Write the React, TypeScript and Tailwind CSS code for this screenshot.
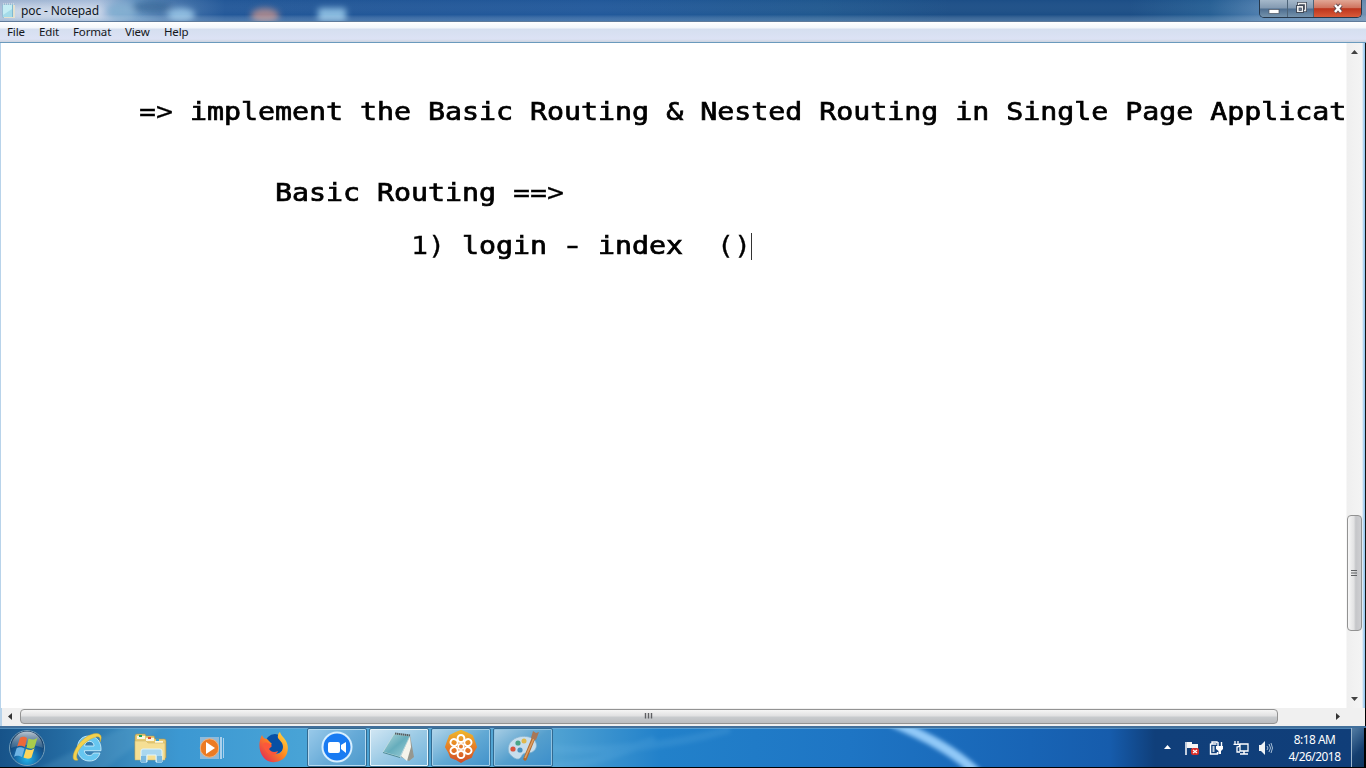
import React from "react";

const menuItems = [
  { label: "File", width: "w-[32px]" },
  { label: "Edit", width: "w-[34px]" },
  { label: "Format", width: "w-[52px]" },
  { label: "View", width: "w-[39px]" },
  { label: "Help", width: "w-[40px]" },
];

function NotepadIcon() {
  return (
    <svg width="14" height="16" viewBox="0 0 14 16">
      <rect x="0.5" y="1.5" width="12" height="13" fill="#7fb9d0" />
      <rect x="1" y="2" width="9" height="12" fill="#a4dbe9" />
      <path d="M1 2h9v4L1 12z" fill="#c4edf3" />
      <path d="M11 2h2v13H2v-1h9z" fill="#e3e1cf" />
      <path d="M1 1h12" stroke="#e9eff0" strokeDasharray="1 1" />
    </svg>
  );
}

function TitleBar() {
  return (
    <header className="relative flex h-[21px] shrink-0 items-start overflow-hidden bg-[linear-gradient(90deg,#aebfd8_0px,#b7c9e3_100px,#6f9dc8_135px,#4b79ae_170px,#235899_225px,#225798_320px,#22599b_600px,#20588f_820px,#1c4e86_950px,#1c4e86_1130px,#265f94_1210px,#4e7eae_1260px,#6f90b2_1366px)]">
      <svg className="absolute inset-0" width="1366" height="21">
        <defs>
          <filter id="soft" x="-30%" y="-50%" width="160%" height="200%"><feGaussianBlur stdDeviation="3" /></filter>
          <linearGradient id="titleShade" x1="0" x2="0" y1="0" y2="1">
            <stop offset="0" stopColor="#1d4f89" stopOpacity=".12" /><stop offset=".7" stopColor="#fff" stopOpacity="0" /><stop offset="1" stopColor="#91b2d0" stopOpacity=".35" />
          </linearGradient>
        </defs>
        <g filter="url(#soft)">
          <rect x="8" y="5" width="93" height="13" rx="6" fill="#d3ddec" opacity=".8" />
          <ellipse cx="121" cy="11" rx="14" ry="8" fill="#81add0" />
          <ellipse cx="152" cy="7" rx="20" ry="6" fill="#315f91" opacity=".7" />
          <ellipse cx="181" cy="15" rx="14" ry="7" fill="#8ebce0" />
          <ellipse cx="265" cy="16" rx="14" ry="8" fill="#a1858f" />
          <rect x="318" y="8" width="28" height="14" rx="3" fill="#87b9df" />
        </g>
        <rect width="1366" height="21" fill="url(#titleShade)" />
      </svg>
      <div className="relative flex h-[21px] items-center pl-[2px]">
        <NotepadIcon />
        <span className="ml-[5px] text-[12px] tracking-[-0.12px] text-[#101722]">poc - Notepad</span>
      </div>
      <div className="relative ml-auto mr-[4px] flex h-[18px] w-[103px] overflow-hidden rounded-b-[5px] border border-t-0 border-[#26384b]">
        <button aria-label="Minimize" className="flex w-[28px] items-center justify-center border-r border-[#4d6479] bg-[linear-gradient(#a5b8ca_0%,#8299b1_48%,#4d6d8f_52%,#7593ad_100%)]">
          <svg width="14" height="16"><rect x="2" y="8.5" width="10" height="4" fill="#fff" stroke="#4b5360" strokeWidth=".7" /></svg>
        </button>
        <button aria-label="Restore" className="flex w-[26px] items-center justify-center border-r border-[#4d6479] bg-[linear-gradient(#a5b8ca_0%,#8299b1_48%,#4d6d8f_52%,#7593ad_100%)]">
          <svg width="14" height="16" fill="none"><path d="M4.5 4V2.5h7v7H10" stroke="#424b59" strokeWidth="3" /><path d="M4.5 4V2.5h7v7H10" stroke="#eee" strokeWidth="1.3" /><rect x="2.5" y="4.5" width="7" height="7" fill="#eee" stroke="#424b59" /><rect x="5" y="7" width="2.5" height="2.5" fill="#6b8098" stroke="#424b59" strokeWidth=".7" /></svg>
        </button>
        <button aria-label="Close" className="flex flex-1 items-center justify-center bg-[linear-gradient(#e1a795_0%,#cf745f_46%,#bc351d_51%,#d95b39_100%)]">
          <svg width="14" height="16" fill="none"><path d="m4 4 6 7m0-7-6 7" stroke="#674a4d" strokeWidth="4.3" /><path d="m4 4 6 7m0-7-6 7" stroke="#fff" strokeWidth="2.4" /></svg>
        </button>
      </div>
    </header>
  );
}

function MenuBar() {
  return (
    <nav className="flex h-[22px] shrink-0 items-center border-t border-b border-t-[#5f7b9b] border-b-[#6a9abd] bg-[linear-gradient(#fff_0px,#f2f6fb_6px,#d5dff0_7px,#dce2f5_17px,#cdd4df_20px)] pl-[7px] text-[11.5px] tracking-[-0.15px] text-[#15171b]">
      {menuItems.map((m) => <span key={m.label} className={m.width}>{m.label}</span>)}
    </nav>
  );
}

function Thin({ children }: { children: React.ReactNode }) {
  return <span className="[-webkit-text-stroke:0.3px_#000]">{children}</span>;
}

function DocLine({ children, indent, spacing }: { children: React.ReactNode; indent: string; spacing: string }) {
  return <div className={`${indent} ${spacing} flex h-[27px] items-center`}><div className="origin-left scale-x-[1.1768] whitespace-pre">{children}</div></div>;
}

function Editor() {
  return (
    <div className="flex h-[665px] shrink-0">
      <main className="w-[1344px] overflow-hidden border-l border-[#b8d3ea] bg-white pt-[56px] font-['DejaVu_Sans_Mono',monospace] text-[24px] leading-[27px] text-black [-webkit-text-stroke:0.7px_#000]">
        <DocLine indent="pl-[138px]" spacing="mb-[54px]"><Thin>{"=>"}</Thin>{" implement the Basic Routing & Nested Routing in Single Page Applicat"}</DocLine>
        <DocLine indent="pl-[274px]" spacing="mb-[27px]">{"Basic Routing "}<Thin>{"==>"}</Thin></DocLine>
        <div className="-mt-px flex h-[27px] items-center pl-[410px]">
          <div className="w-[340px]"><div className="origin-left scale-x-[1.1768] whitespace-pre"><Thin>1)</Thin>{" login "}<span className="inline-block scale-x-[1.35] [-webkit-text-stroke:0.3px_#000]">-</span>{" index  "}<Thin>()</Thin></div></div>
          <span className="h-[27px] w-px bg-[#333]" />
        </div>
      </main>
      <div className="flex w-[22px] flex-col items-center border-r border-[#111] bg-[linear-gradient(90deg,#fff_2px,#efefef_3px,#f4f4f4_18px,#9bcaf0_20px)] pr-px">
        <svg className="mt-[7px] shrink-0" width="7" height="5"><path d="M0 4 3.5 0 7 4z" fill="#414141" /></svg>
        <div className="mt-[460px] flex h-[116px] w-[15px] shrink-0 items-center justify-center rounded-sm border border-[#929292] bg-[linear-gradient(90deg,#f7f7f7,#e2e2e3_45%,#c5c6c9_60%,#cfcfd2)]">
          <svg width="7" height="9"><path d="M0 1.5h6M0 4h6M0 6.5h6" stroke="#5f6063" strokeWidth="1.2" /></svg>
        </div>
        <svg className="mt-[66px] shrink-0" width="7" height="5"><path d="m0 0 3.5 4L7 0z" fill="#414141" /></svg>
      </div>
    </div>
  );
}

function HorizontalScroll() {
  return (
    <div className="flex h-[18px] shrink-0 items-center border-l-2 border-r border-l-[#b8d3ea] border-r-black bg-[#f0f0f0] pb-px">
      <svg className="ml-[5px]" width="5" height="7"><path d="M5 0 1 3.5 5 7z" fill="#333" /></svg>
      <div className="ml-[8px] flex h-[15px] w-[1258px] items-center justify-center rounded-sm border border-[#939393] bg-[linear-gradient(#f5f5f5,#e1e1e2_45%,#c8cbce_55%,#bbbdc0)]">
        <svg className="mr-[2px] mb-px" width="9" height="8"><path d="M1.5 1v5.5M4.5 1v5.5M7.5 1v5.5" stroke="#5f6063" strokeWidth="1.4" /></svg>
      </div>
      <svg className="ml-[58px]" width="5" height="7"><path d="m0 0 4 3.5L0 7z" fill="#333" /></svg>
    </div>
  );
}

function StartIcon() {
  return (
    <svg width="38" height="38" viewBox="0 0 38 38">
      <defs><radialGradient id="orb" cx=".5" cy=".8" r=".7"><stop stopColor="#22b4eb" /><stop offset=".55" stopColor="#165e9b" /><stop offset="1" stopColor="#12355c" /></radialGradient><linearGradient id="orbGlow" x1="0" x2="0" y1="0" y2="1"><stop stopColor="#e6edf2" stopOpacity=".8" /><stop offset="1" stopColor="#8ba7b9" stopOpacity=".25" /></linearGradient></defs>
      <circle cx="19" cy="19" r="17.5" fill="url(#orb)" stroke="#739eba" />
      <path d="M3 19C4-3 34-3 35 19c-9-4-22-4-32 0" fill="url(#orbGlow)" />
      <path d="M12 9c3-2 5-1 7 0l-2 9c-3-1-6-2-8 0z" fill="#ed693a" />
      <path d="M20.500 9.500c3 1 6 2 9-1l-3 10c-3 2-5 1-8 0z" fill="#a8cc4b" />
      <path d="M8.500 19.500c3-2 5-1 8 0l-2.500 8.500c-3-1-5-2-8 0z" fill="#6fb4e4" />
      <path d="M18 20c3 1 5.500 2 8.500-1l-3 9.500c-3 2-5 1-8 0z" fill="#fdd65b" />
    </svg>
  );
}

function ExplorerIcon() {
  return (
    <svg width="32" height="34" viewBox="0 0 32 34" fill="none">
      <path d="M17 5C9 5 5.500 10.500 5.500 17.500S10 30 17.500 30c5.500 0 9-3 10.500-8h-6.500c-1 1.700-2.200 2.500-4 2.500-3 0-5-1.700-5.200-4.800H29C29.500 11 25 5 17 5M12.500 15c.5-3 2.300-4.600 5-4.600s4.300 1.700 4.600 4.600z" fill="#67c6f0" stroke="#d6f3ff" strokeWidth=".8" fillRule="evenodd" />
      <path d="M6 29C-4 32 3 14 13 7 21 1 33 0 28 11c1-6-2-6-7-4C11 11 1 24 6 29" fill="#f3d24f" stroke="#d9ac2d" strokeWidth=".5" />
    </svg>
  );
}

function FolderIcon() {
  return (
    <svg width="34" height="32" viewBox="0 0 34 32">
      <path d="M2 4q0-2 2-2h8l1 2h8l1 3h9q2 0 2 2v17H2z" fill="#e8ca72" stroke="#a9924f" strokeWidth=".6" />
      <path d="M4 4h8v3H4m9-1h8v3h-8m9 0h8v2h-8" fill="#faf7df" /><path d="M6 3h3v2H6" fill="#1aa356" /><path d="M15 5h3v2h-3" fill="#db4b33" /><path d="M23 7h3v2h-3" fill="#369fd0" />
      <path d="M2 9h11l2 2h17v17H2z" fill="#f5df94" stroke="#c7ad66" strokeWidth=".5" />
      <path d="M8 30V19q0-2 2-2h17q2 0 2 2v11h-6v-7h-9v7z" fill="#a9d7ef" stroke="#e0f5fd" /><path d="M8 24v6h5v-6m11 0v6h5v-6" fill="#79b8df" />
    </svg>
  );
}

function MediaIcon() {
  return <svg width="28" height="28" viewBox="0 0 28 28"><path d="M2 3h19v22H2z" fill="#8ebbdc" /><path d="M22 3h2v22h-2m3-21h1v20h-1" fill="#abd1ed" /><circle cx="11.5" cy="14" r="9.2" fill="#ec7b24" stroke="#efb27f" /><path d="m8 8 9 6-9 6z" fill="#fff" /></svg>;
}

function FirefoxIcon() {
  return (
    <svg width="32" height="34" viewBox="0 0 32 34">
      <defs><linearGradient id="flame" x1="1" x2="0" y1="0" y2="1"><stop stopColor="#ffe64a" /><stop offset=".45" stopColor="#ff8a1f" /><stop offset="1" stopColor="#dc1961" /></linearGradient></defs>
      <circle cx="17" cy="14" r="10" fill="#0750a5" />
      <path d="M4 5c1 3 3 4 5 4l5 5-4 3c2 9 14 10 15 0 0-5-4-7-5-9-1-4 2-6 2-6 1 4 4 5 6 9 4 7 2 20-11 21C5 34-3 18 4 5" fill="url(#flame)" />
      <path d="M5 14c3-3 5-1 7 0l2 2-3 3c2 3 5 4 9 2-2 7-13 5-15-7" fill="#fc573b" />
    </svg>
  );
}

function ZoomIcon() {
  return <svg width="32" height="32" viewBox="0 0 32 32"><circle cx="16" cy="16" r="15.5" fill="#d7efff" /><circle cx="16" cy="16" r="13.5" fill="#197bf2" /><rect x="7" y="11" width="12" height="11" rx="2" fill="#fff" /><path d="m20 14 5-3v11l-5-4z" fill="#fff" /></svg>;
}

function NotebookIcon() {
  return (
    <svg width="34" height="32" viewBox="0 0 34 32">
      <defs><linearGradient id="paper" x1="0" x2="1" y1="0" y2="1"><stop stopColor="#b5d9db" /><stop offset=".5" stopColor="#66adbc" /><stop offset="1" stopColor="#9fd1da" /></linearGradient></defs>
      <path d="m28 4 4 22-5 4-8-4" fill="#96978f" />
      <path d="m28 5-9 20 6 5 4-14z" fill="#f5f4ec" />
      <path d="M12 3 28 5 18 26 1 21z" fill="url(#paper)" stroke="#c9dfe1" strokeWidth=".7" />
      <path d="m13 2.500 15 2" stroke="#555e60" strokeWidth="2" strokeDasharray="1.5 .5" />
      <path d="m1 21.500 17 5" stroke="#4f8d98" />
    </svg>
  );
}

function FlowerIcon() {
  return (
    <svg width="32" height="33" viewBox="0 0 32 33">
      <defs><linearGradient id="amber" x1="0" x2="0" y1="0" y2="1"><stop stopColor="#efb52c" /><stop offset=".6" stopColor="#e47625" /><stop offset="1" stopColor="#cf4f2a" /></linearGradient></defs>
      <path d="m16 1 5 2 6 3 2 5 2 6-3 5-2 5-5 2-5 3-5-3-5-2-2-5-3-5 2-6 2-5 6-3z" fill="url(#amber)" stroke="url(#amber)" strokeWidth="2" strokeLinejoin="round" />
      {[0, 60, 120, 180, 240, 300].map((angle) => <ellipse key={angle} cx="16" cy="8.5" rx="3.4" ry="3.6" fill="none" stroke="#fff" strokeWidth="2" transform={`rotate(${angle} 16 16.5)`} />)}
      <circle cx="16" cy="16.5" r="3.6" fill="#fff" /><circle cx="16" cy="16.5" r="2" fill="#e17a2b" />
    </svg>
  );
}

function PaintIcon() {
  return (
    <svg width="34" height="33" viewBox="0 0 34 33">
      <path d="M3 23C-1 12 11 4 23 7c11 3 9 16-1 16-5 0-5 1-7 4-3 5-9 0-12-4" fill="#c7deed" stroke="#83b2cf" strokeWidth=".8" />
      <circle cx="7" cy="19" r="2.6" fill="#d9553f" /><circle cx="12" cy="13" r="2.6" fill="#49a487" /><circle cx="18" cy="11" r="2.5" fill="#e0b84b" /><circle cx="14" cy="20" r="2.6" fill="#4a91bd" />
      <path d="m28 7-9 22" stroke="#b36b30" strokeWidth="3.5" strokeLinecap="round" /><path d="m28 8-9 20" stroke="#e0a063" strokeWidth="1.6" /><path d="m25 8 2-7 3 2 3-1-3 8z" fill="#a87756" />
    </svg>
  );
}

function Taskbar() {
  return (
    <footer className="relative flex h-[42px] shrink-0 overflow-hidden border-t-2 border-b border-t-[#416f9b] border-b-black bg-[linear-gradient(90deg,#175389_0px,#246ba2_65px,#398abe_130px,#3c98d2_180px,#48a3d6_300px,#54a5d3_545px,#2281ca_660px,#1e75c4_850px,#1864b5_1030px,#165cac_1110px,#134f96_1130px,#103f7a_1155px,#103e79_1364px)]">
      <svg className="absolute inset-0" width="1366" height="40">
        <defs><filter id="rayBlur"><feGaussianBlur stdDeviation="2" /></filter></defs>
        <path d="M35 42C70 25 110 5 130-3h35C145 13 118 28 105 42z" fill="#78b8d9" opacity=".18" filter="url(#rayBlur)" />
        <path d="M545 20c50 5 130-2 185-19M545 38c45 2 75-15 110-26" fill="none" stroke="#76bdea" strokeWidth="8" opacity=".16" filter="url(#rayBlur)" />
        <path d="M892-6C925 8 955 23 978 46" fill="none" stroke="#91c9f8" strokeWidth="10" filter="url(#rayBlur)" />
        <path d="M0 .5h1366" stroke="#76b3dc" opacity=".6" />
      </svg>
      <div className="relative flex h-[39px] items-center">
        <div className="flex w-[57px] justify-center pr-[4px]"><StartIcon /></div>
        <div className="flex w-[62px] justify-center"><ExplorerIcon /></div>
        <div className="flex w-[62px] justify-center"><FolderIcon /></div>
        <div className="flex w-[62px] justify-center"><MediaIcon /></div>
        <div className="flex w-[64px] justify-center pr-[2px] pb-[2px]"><FirefoxIcon /></div>
        <div className="flex h-full gap-[2px]">
          <div className="flex w-[60px] items-center justify-center rounded-[2px] border border-[#326a91] bg-[linear-gradient(135deg,#9acaea,#66aad7_55%,#4e9acc)] pb-px shadow-[inset_0_0_0_1px_#b5daf0]"><ZoomIcon /></div>
          <div className="flex w-[60px] items-center justify-center rounded-[2px] border border-[#3c7396] bg-[linear-gradient(145deg,#d2e7f4,#9bcae5_50%,#72b3dc)] pb-px shadow-[inset_0_0_0_1px_#e6f4fb]"><NotebookIcon /></div>
          <div className="flex w-[60px] items-center justify-center rounded-[2px] border border-[#326a91] bg-[linear-gradient(145deg,#b3d5e9,#62a9d4_52%,#4292ca)] pb-[2px] shadow-[inset_0_0_0_1px_#a7d1ea]"><FlowerIcon /></div>
          <div className="flex w-[60px] items-center justify-center rounded-[2px] border border-[#326a91] bg-[linear-gradient(145deg,#a8cee5,#559fcd_52%,#3b8ecb)] pb-[2px] shadow-[inset_0_0_0_1px_#91c3e2]"><PaintIcon /></div>
        </div>
      </div>
      <div className="relative ml-auto flex h-[39px] items-center text-white">
        <svg className="mr-[13px]" width="7" height="5"><path d="M0 4 3.5 0 7 4z" fill="#fff" /></svg>
        <div className="flex w-[100px] shrink-0 items-center gap-[8px]">
          <svg className="shrink-0" width="17" height="16" viewBox="0 0 17 16"><path d="M2 2v13" stroke="#fff" strokeWidth="1.5" /><path d="M3 2h5v2h6v6H8V8H3z" fill="#f5f5f5" /><rect x="7" y="8" width="8" height="7" rx="2" fill="#d82f2a" /><path d="m9 10 4 3m0-3-4 3" stroke="#fff" strokeWidth="1.3" /></svg>
          <svg className="shrink-0" width="16" height="16" viewBox="0 0 16 16" fill="none"><path d="M3 3.500V2h5v1M1.500 4h6M1.500 3.500v10.500h7v-2" stroke="#fff" strokeWidth="1.4" /><path d="M3.500 6h2v6h-2" fill="#c2d0dd" /><path d="M9 2v4m3.500-4v4" stroke="#fff" strokeWidth="1.4" /><path d="M7 6h7v3l-2 2v3H9.500v-3L7 9z" fill="#fff" /></svg>
          <svg className="shrink-0" width="17" height="16" viewBox="0 0 17 16" fill="none"><path d="M2 1v3m3-3v3M.500 4.300h6v2L4 7v5h3" stroke="#fff" strokeWidth="1.3" /><path d="M7 4h8v7H7z" fill="#14457b" stroke="#fff" strokeWidth="1.3" /><path d="M11 11v3m-4 0h8" stroke="#fff" strokeWidth="1.5" /></svg>
          <svg className="shrink-0" width="17" height="16" viewBox="0 0 17 16" fill="none"><path d="M1 5h2l4-4v14l-4-4H1z" fill="#eef2f5" /><path d="M9 6q2 2 0 4m2-6q3 4 0 8m2-9q3 5 0 10" stroke="#b7cde1" strokeWidth=".9" /></svg>
        </div>
        <div className="w-[61px] text-center text-[11.9px] leading-[17px] tracking-[-0.5px]"><div>8:18 AM</div><div>4/26/2018</div></div>
        <div className="ml-[6px] h-[39px] w-[13px] border-l border-[#9bb5cb] bg-[linear-gradient(135deg,#527ca3,#153f70_60%,#0e355e)]" />
        <div className="h-[39px] w-[2px] bg-black" />
      </div>
    </footer>
  );
}

export default function App() {
  return (
    <div className="flex h-[768px] w-[1366px] flex-col overflow-hidden bg-[#d9e9f5] font-['Noto_Sans',sans-serif]">
      <TitleBar />
      <MenuBar />
      <Editor />
      <HorizontalScroll />
      <Taskbar />
    </div>
  );
}
